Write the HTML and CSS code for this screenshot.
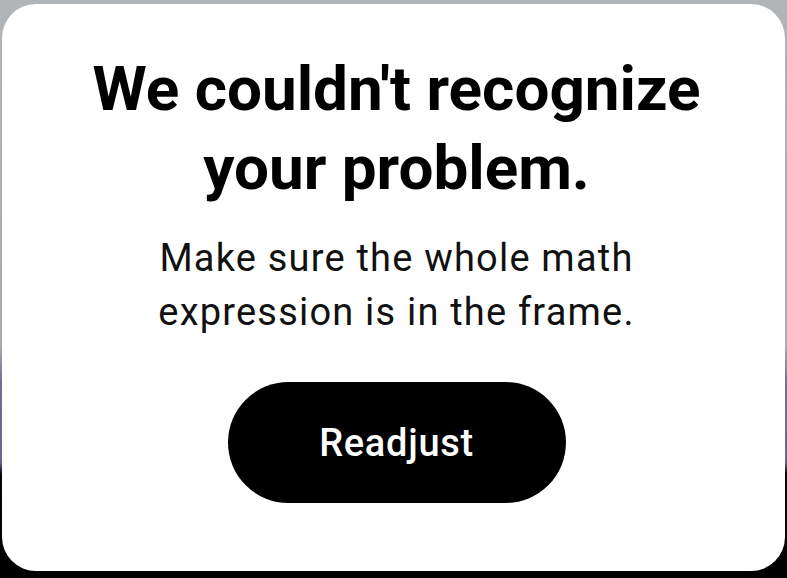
FILE: index.html
```html
<!DOCTYPE html>
<html lang="en">
<head>
  <meta charset="UTF-8">
  <meta name="viewport" content="width=device-width, initial-scale=1.0">
  <title>We couldn't recognize your problem</title>
  <link rel="stylesheet" href="styles.css">
</head>
<body>
  <div class="sheet">
    <h1 class="title">We couldn't recognize your problem.</h1>
    <p class="hint">Make sure the whole math expression is in the frame.</p>
    <button class="button" type="button">Readjust</button>
  </div>
</body>
</html>
```

FILE: styles.css
```css
html, body {
  height: 100%;
}
body {
  margin: 0;
  font-family: Roboto, "Liberation Sans", Arial, sans-serif;
  background: linear-gradient(to bottom, #b2b5b8 0, #a7abae 60%, #6f7190 66%, #66688a 80%, #050505 82%, #000 100%);
  box-sizing: border-box;
  padding: 4px 2px 7px 2px;
}
.sheet {
  height: 100%;
  background-color: #fff;
  border-radius: 34px;
  box-sizing: border-box;
  padding-top: 45px;
  padding-left: 6px;
  text-align: center;
  display: flex;
  flex-direction: column;
  align-items: center;
}
.title {
  margin: 0;
  width: 640px;
  font-size: 62px;
  line-height: 79px;
  font-weight: 700;
  color: #000;
}
.hint {
  margin: 24px 0 0;
  width: 520px;
  font-size: 38px;
  line-height: 54px;
  letter-spacing: 1.2px;
  font-weight: 400;
  color: #111;
}
.button {
  margin-top: 43px;
  width: 338px;
  height: 121px;
  border: none;
  border-radius: 61px;
  background-color: #000;
  color: #fff;
  font-family: inherit;
  font-size: 38px;
  font-weight: 500;
  letter-spacing: 0.7px;
  cursor: pointer;
}
```
